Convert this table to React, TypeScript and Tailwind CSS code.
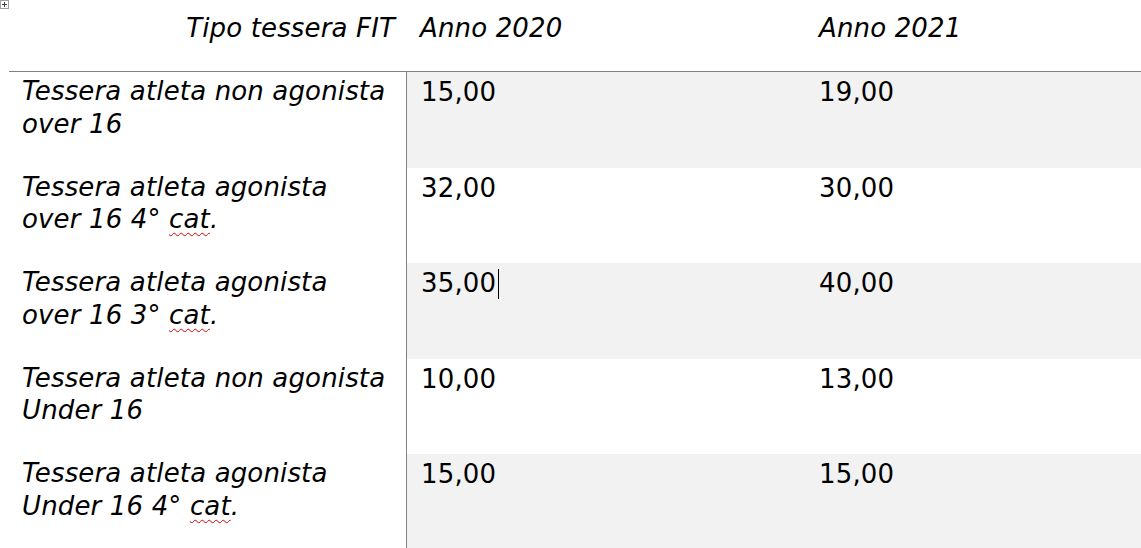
import React from "react";

const rows = [
  { a: "Tessera atleta non agonista", b: "over 16", cat: false, v1: "15,00", v2: "19,00", shade: true },
  { a: "Tessera atleta agonista", b: "over 16 4° ", cat: true, v1: "32,00", v2: "30,00", shade: false },
  { a: "Tessera atleta agonista", b: "over 16 3° ", cat: true, v1: "35,00", v2: "40,00", shade: true, cursor: true },
  { a: "Tessera atleta non agonista", b: "Under 16", cat: false, v1: "10,00", v2: "13,00", shade: false },
  { a: "Tessera atleta agonista", b: "Under 16 4° ", cat: true, v1: "15,00", v2: "15,00", shade: true },
];

function MoveIcon() {
  return (
    <svg width="9" height="9" viewBox="0 0 9 9" className="absolute left-0 top-0">
      <rect x="0.5" y="0.5" width="8" height="8" fill="white" stroke="#a0a0a0" strokeWidth="1" />
      <path d="M4.5 2v5M2 4.5h5" stroke="#404040" strokeWidth="1" />
    </svg>
  );
}

export default function App() {
  return (
    <div
      className="relative w-[1141px] h-[548px] overflow-hidden bg-white text-black tracking-[0.15px]"
      style={{ fontFamily: '"DejaVu Sans", Verdana, sans-serif' }}
    >
      <MoveIcon />
      <div className="pl-[9px]">
        <div className="flex h-[72px] italic text-[26px] leading-[32px] border-b border-[#808080]">
          <div className="w-[398px] pr-[12px] pt-[12px] text-right">Tipo tessera FIT</div>
          <div className="w-[398px] pl-[13px] pt-[12px]">Anno 2020</div>
          <div className="flex-1 pl-[14px] pt-[12px]">Anno 2021</div>
        </div>
        {rows.map((r, i) => (
          <div key={i} className="flex h-[95.5px] text-[26px] leading-[32.5px]">
            <div className="w-[398px] pl-[13px] pt-[3px] italic border-r border-[#808080]">
              <div>{r.a}</div>
              <div>
                {r.b}
                {r.cat && (
                  <>
                    <span className="underline decoration-wavy decoration-[#e00000] decoration-1 underline-offset-[4px]">cat</span>.
                  </>
                )}
              </div>
            </div>
            <div className={`flex flex-1 ${r.shade ? "bg-[#f2f2f2]" : "bg-white"}`}>
              <div className="w-[397px] pl-[14px] pt-[4px]">
                <span className="relative">
                  {r.v1}
                  {r.cursor && <span className="absolute right-[-3px] top-[1px] w-px h-[30px] bg-black" />}
                </span>
              </div>
              <div className="flex-1 pl-[15px] pt-[4px]">{r.v2}</div>
            </div>
          </div>
        ))}
      </div>
    </div>
  );
}
